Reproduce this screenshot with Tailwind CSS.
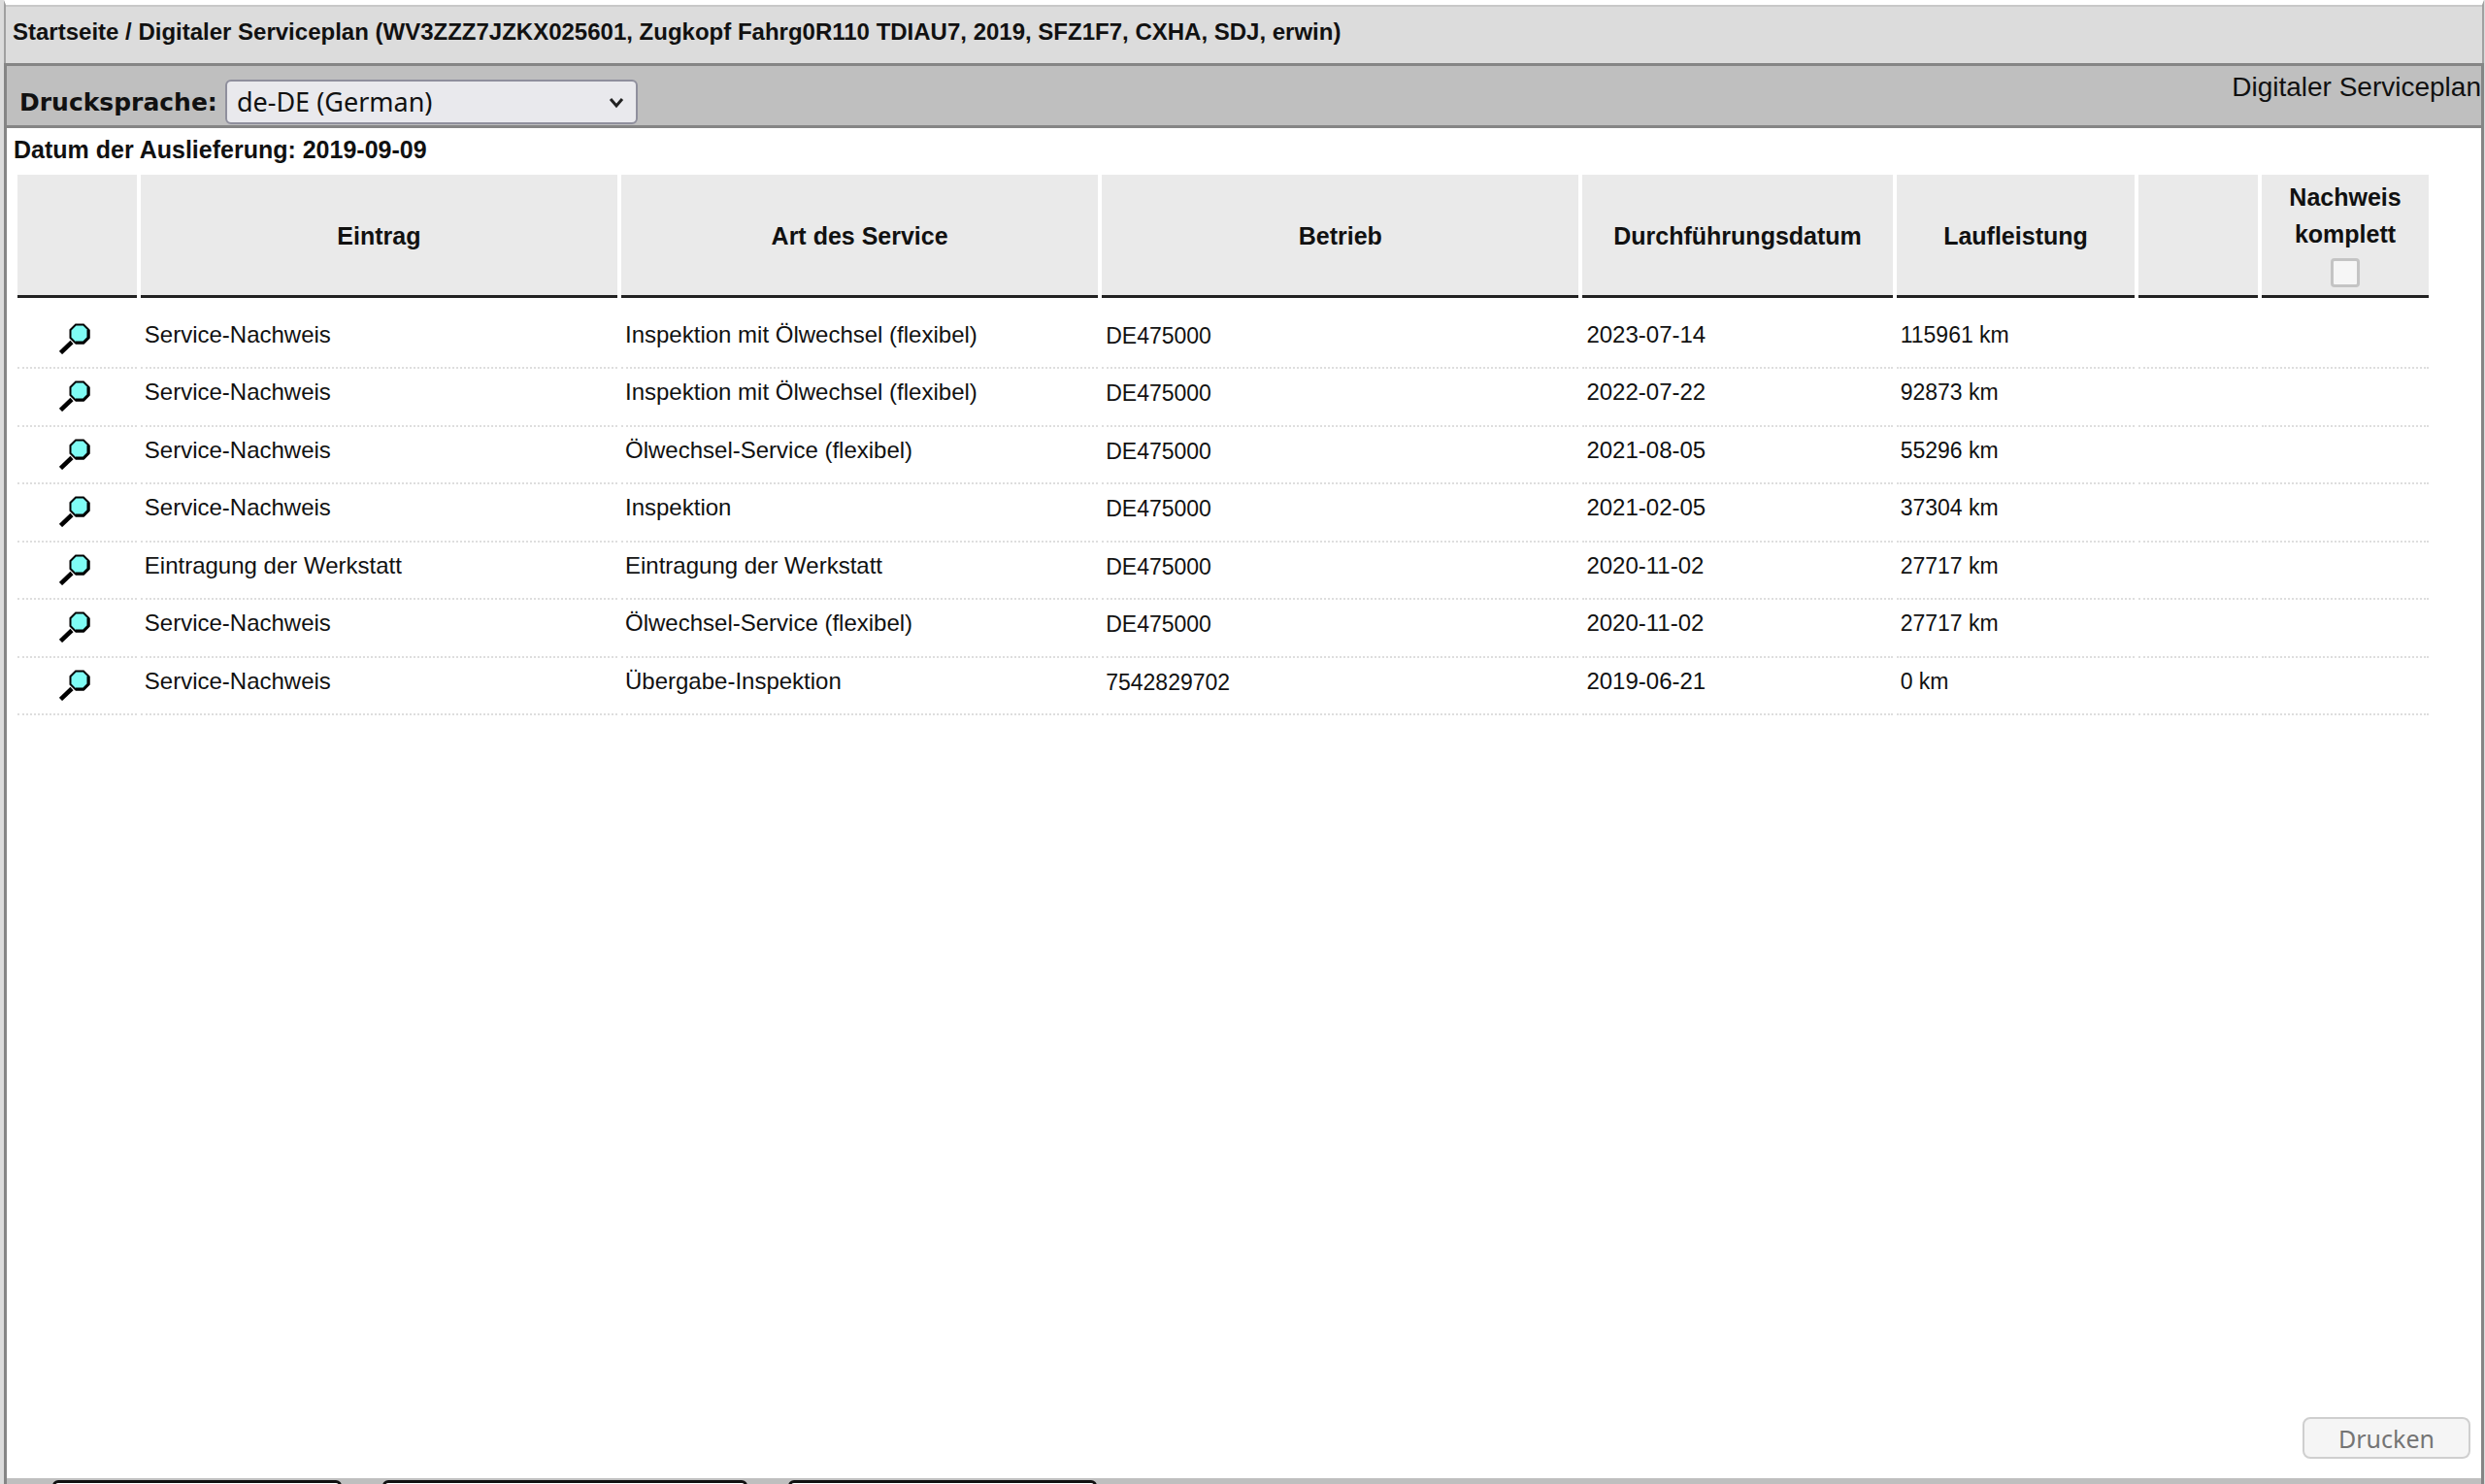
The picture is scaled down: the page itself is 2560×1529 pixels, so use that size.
<!DOCTYPE html>
<html lang="de">
<head>
<meta charset="utf-8">
<title>Digitaler Serviceplan</title>
<script src="https://cdn.jsdelivr.net/npm/@tailwindcss/browser@4"></script>
</head>
<body class="flex h-screen flex-col overflow-hidden bg-[#dcdcdc] font-['Liberation_Sans',Arial,sans-serif] text-[#111]">
<header class="ml-1 mr-px h-[65px] shrink-0 border-x-2 border-t-5 border-x-[#a0a0a0] border-t-white bg-[#dcdcdc]">
  <h1 class="border-t-2 border-[#c8c8c8] pt-1.5 pl-[7px] text-2xl leading-10 font-bold">Startseite / Digitaler Serviceplan (WV3ZZZ7JZKX025601, Zugkopf Fahrg0R110 TDIAU7, 2019, SFZ1F7, CXHA, SDJ, erwin)</h1>
</header>
<main class="ml-1 mr-px flex min-h-0 grow flex-col border-x-3 border-t-3 border-[#858585] bg-white">
  <div class="flex shrink-0 justify-between border-b-3 border-[#858585] bg-[#bfbfbf] pl-[13px]">
    <div class="flex h-[61px] items-center gap-2 pt-3">
      <label for="sprache" class="pt-0.5 font-['DejaVu_Sans',Verdana,sans-serif] text-[25px] font-bold">Drucksprache:</label>
      <div class="relative">
        <select id="sprache" class="block h-[46px] w-[425px] appearance-none rounded-md border-2 border-[#8f8f9d] bg-[#e9e9ed] pl-2.5 font-['Noto_Sans',sans-serif] text-[27px] leading-8">
          <option>de-DE (German)</option>
        </select>
        <svg class="pointer-events-none absolute right-3 top-4 h-4 w-5" viewBox="0 0 20 16" fill="none" stroke="#222" stroke-width="3"><path d="M4 4l6 7 6-7"/></svg>
      </div>
    </div>
    <p class="pt-0.5 text-[28px] leading-10">Digitaler Serviceplan</p>
  </div>
  <p class="pl-[7px] pt-0.5 pb-1.5 text-[25px] leading-10 font-bold">Datum der Auslieferung: 2019-09-09</p>
  <div class="grow pl-[7px] pr-[50px]">
    <table class="w-full table-fixed border-separate border-spacing-x-1 border-spacing-y-0">
      <colgroup><col class="w-[5%]"><col class="w-[20%]"><col class="w-[20%]"><col class="w-[20%]"><col class="w-[13%]"><col class="w-[10%]"><col class="w-[5%]"><col class="w-[7%]"></colgroup>
      <thead>
        <tr class="h-[127px] text-[25px] *:border-b-3 *:border-[#222] *:bg-[#eaeaea] *:pt-1">
          <th></th><th>Eintrag</th><th>Art des Service</th><th>Betrieb</th><th>Durchführungsdatum</th><th>Laufleistung</th><th></th>
          <th class="align-top leading-[38px]"><label for="komplett" class="block">Nachweis komplett</label><input id="komplett" type="checkbox" disabled class="mx-auto mt-1.5 block size-[30px] appearance-none rounded-sm border-3 border-[#c4c4c4] bg-[#f6f6f6]"></th>
        </tr>
      </thead>
      <tbody id="rows"></tbody>
    </table>
  </div>
  <div class="flex shrink-0 justify-end pr-[11px] pb-5">
    <button type="button" disabled class="h-[43px] w-[173px] rounded-lg border-2 border-[#cfcfcf] bg-[#f5f5f5] font-['Noto_Sans',sans-serif] text-[25px] leading-8 text-[#747474]">Drucken</button>
  </div>
  <nav class="flex h-[6px] shrink-0 gap-[42px] overflow-hidden bg-[#bfbfbf] pt-0.5 pl-[47px]">
    <span class="h-10 w-[298px] rounded-t-md border-3 border-[#111] bg-white"></span>
    <span class="h-10 w-[376px] rounded-t-md border-3 border-[#111] bg-white"></span>
    <span class="h-10 w-[318px] rounded-t-md border-3 border-[#111] bg-white"></span>
  </nav>
</main>
<script>
const entries = [
  ['Service-Nachweis', 'Inspektion mit Ölwechsel (flexibel)', 'DE475000', '2023-07-14', '115961 km'],
  ['Service-Nachweis', 'Inspektion mit Ölwechsel (flexibel)', 'DE475000', '2022-07-22', '92873 km'],
  ['Service-Nachweis', 'Ölwechsel-Service (flexibel)', 'DE475000', '2021-08-05', '55296 km'],
  ['Service-Nachweis', 'Inspektion', 'DE475000', '2021-02-05', '37304 km'],
  ['Eintragung der Werkstatt', 'Eintragung der Werkstatt', 'DE475000', '2020-11-02', '27717 km'],
  ['Service-Nachweis', 'Ölwechsel-Service (flexibel)', 'DE475000', '2020-11-02', '27717 km'],
  ['Service-Nachweis', 'Übergabe-Inspektion', '7542829702', '2019-06-21', '0 km'],
];
const icon = '<button type="button" aria-label="Details anzeigen" class="mx-auto block pt-1 pr-1"><svg class="size-8" viewBox="0 0 32 32"><path d="M1.500 30.500L13 19.500" stroke="#000" stroke-width="4.500"/><path d="M17 1.500h8l5.500 5.500v8l-5.500 5.500h-8l-5.500-5.500v-8z" fill="#7ffcf4" stroke="#000" stroke-width="2"/><path d="M30 7v8l-5 5h-8" fill="none" stroke="#000" stroke-width="3"/></svg></button>';
document.getElementById('rows').innerHTML = '<tr class="h-[14px]"><td colspan="8"></td></tr>' + entries.map(([a, b, c, d, e]) =>
  `<tr class="h-[59px] odd:h-[60px] align-top text-2xl leading-8 *:border-b-2 *:border-dotted *:border-[#dedede] *:px-1 *:pt-2"><td>${icon}</td><td>${a}</td><td>${b}</td><td class="text-[23px] leading-[34px]">${c}</td><td>${d}</td><td class="text-[23px]">${e}</td><td></td><td></td></tr>`).join('');
</script>
</body>
</html>
